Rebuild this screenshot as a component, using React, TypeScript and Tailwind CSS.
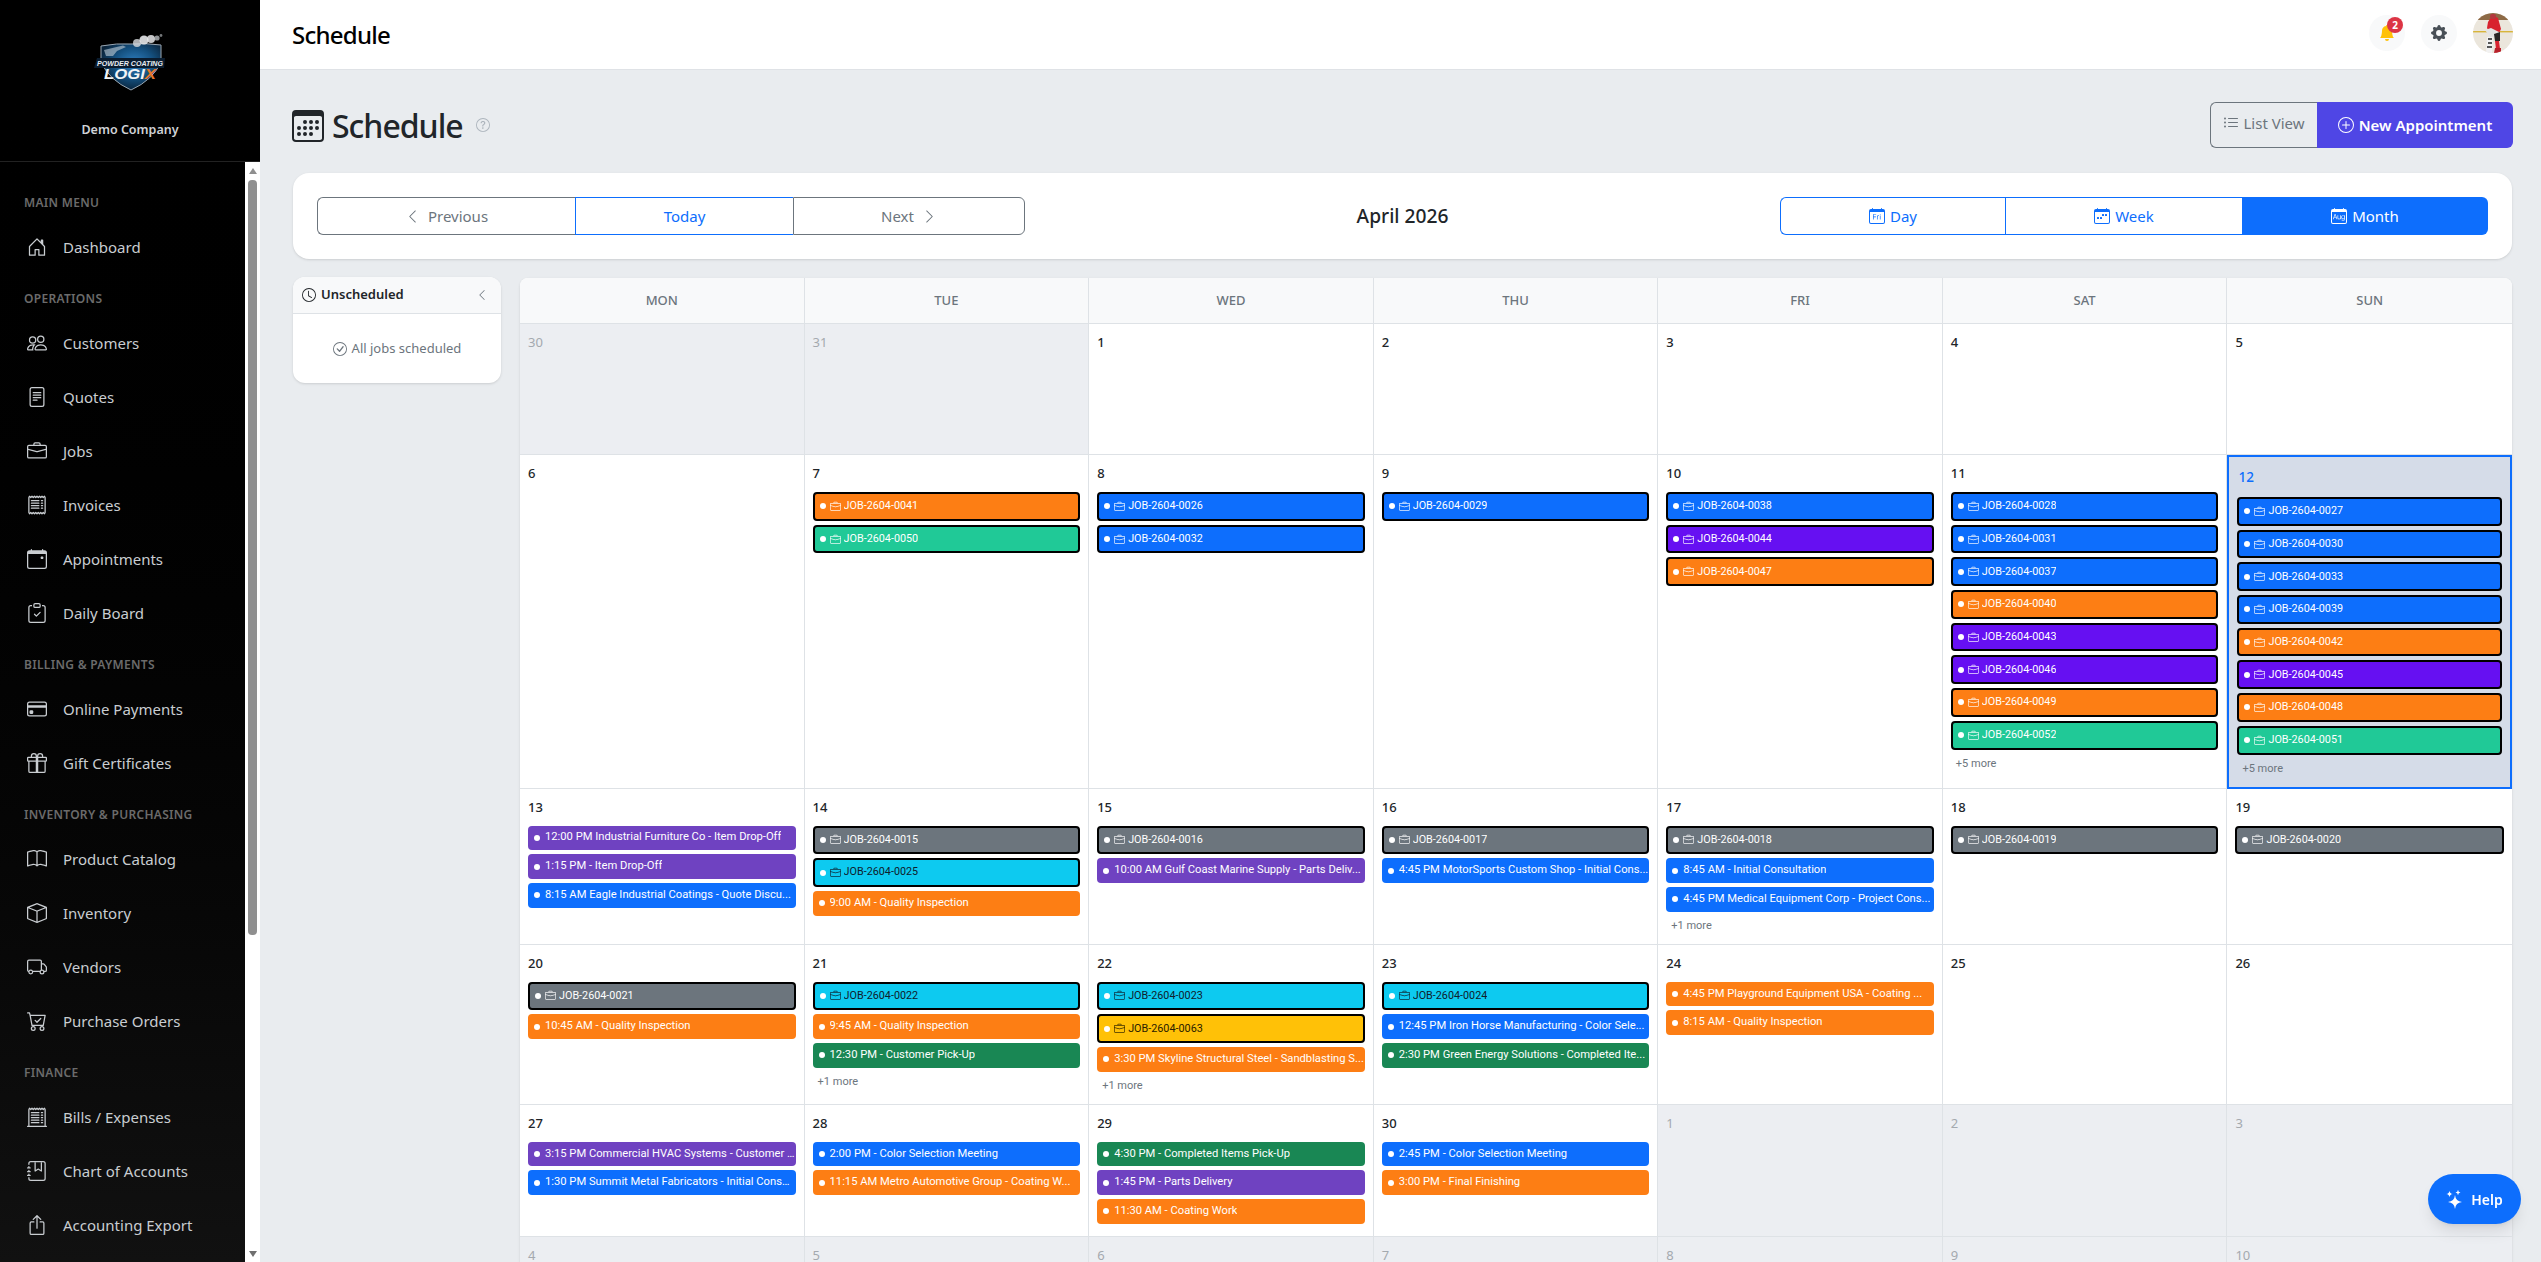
import React from "react";
import {
  BsHouseDoor, BsPeople, BsFileText, BsBriefcase, BsReceipt, BsCalendarEvent, BsClipboardCheck,
  BsCreditCard, BsGift, BsBook, BsBox, BsTruck, BsCartCheck, BsReceiptCutoff, BsJournalBookmark,
  BsBoxArrowUp, BsCalendar3, BsQuestionCircle, BsClock, BsCheckCircle, BsChevronLeft, BsChevronRight,
  BsListUl, BsPlusCircle, BsCalendarDay, BsCalendarWeek, BsCalendarMonth, BsBellFill, BsGearFill,
} from "react-icons/bs";

type IconT = React.ComponentType<{ className?: string; size?: number }>;

const NAV: { label: string; items: [string, IconT][] }[] = [
  { label: "Main Menu", items: [["Dashboard", BsHouseDoor]] },
  {
    label: "Operations",
    items: [
      ["Customers", BsPeople],
      ["Quotes", BsFileText],
      ["Jobs", BsBriefcase],
      ["Invoices", BsReceipt],
      ["Appointments", BsCalendarEvent],
      ["Daily Board", BsClipboardCheck],
    ],
  },
  { label: "Billing & Payments", items: [["Online Payments", BsCreditCard], ["Gift Certificates", BsGift]] },
  {
    label: "Inventory & Purchasing",
    items: [
      ["Product Catalog", BsBook],
      ["Inventory", BsBox],
      ["Vendors", BsTruck],
      ["Purchase Orders", BsCartCheck],
    ],
  },
  {
    label: "Finance",
    items: [
      ["Bills / Expenses", BsReceiptCutoff],
      ["Chart of Accounts", BsJournalBookmark],
      ["Accounting Export", BsBoxArrowUp],
    ],
  },
];

const COLORS = {
  blue: "bg-[#0d6efd] text-white",
  orange: "bg-[#fd7e14] text-white",
  teal: "bg-[#20c997] text-white",
  indigo: "bg-[#6610f2] text-white",
  purple: "bg-[#6f42c1] text-white",
  gray: "bg-[#6c757d] text-white",
  cyan: "bg-[#0dcaf0] text-[#10202c]",
  yellow: "bg-[#ffc107] text-[#2a2000]",
  green: "bg-[#198754] text-white",
};
type ColorName = keyof typeof COLORS;
type Chip = [string, ColorName];
type Cell = { d: number; other?: boolean; today?: boolean; chips?: Chip[]; more?: number };

const j = (n: string, c: ColorName): Chip => [`JOB-2604-${n}`, c];

const CELLS: Cell[] = [
  { d: 30, other: true }, { d: 31, other: true }, { d: 1 }, { d: 2 }, { d: 3 }, { d: 4 }, { d: 5 },
  { d: 6 },
  { d: 7, chips: [j("0041", "orange"), j("0050", "teal")] },
  { d: 8, chips: [j("0026", "blue"), j("0032", "blue")] },
  { d: 9, chips: [j("0029", "blue")] },
  { d: 10, chips: [j("0038", "blue"), j("0044", "indigo"), j("0047", "orange")] },
  {
    d: 11, more: 5,
    chips: [j("0028", "blue"), j("0031", "blue"), j("0037", "blue"), j("0040", "orange"), j("0043", "indigo"), j("0046", "indigo"), j("0049", "orange"), j("0052", "teal")],
  },
  {
    d: 12, today: true, more: 5,
    chips: [j("0027", "blue"), j("0030", "blue"), j("0033", "blue"), j("0039", "blue"), j("0042", "orange"), j("0045", "indigo"), j("0048", "orange"), j("0051", "teal")],
  },
  {
    d: 13,
    chips: [
      ["12:00 PM Industrial Furniture Co - Item Drop-Off", "purple"],
      ["1:15 PM - Item Drop-Off", "purple"],
      ["8:15 AM Eagle Industrial Coatings - Quote Discu...", "blue"],
    ],
  },
  { d: 14, chips: [j("0015", "gray"), j("0025", "cyan"), ["9:00 AM - Quality Inspection", "orange"]] },
  { d: 15, chips: [j("0016", "gray"), ["10:00 AM Gulf Coast Marine Supply - Parts Deliv...", "purple"]] },
  { d: 16, chips: [j("0017", "gray"), ["4:45 PM MotorSports Custom Shop - Initial Cons...", "blue"]] },
  {
    d: 17, more: 1,
    chips: [j("0018", "gray"), ["8:45 AM - Initial Consultation", "blue"], ["4:45 PM Medical Equipment Corp - Project Cons...", "blue"]],
  },
  { d: 18, chips: [j("0019", "gray")] },
  { d: 19, chips: [j("0020", "gray")] },
  { d: 20, chips: [j("0021", "gray"), ["10:45 AM - Quality Inspection", "orange"]] },
  { d: 21, more: 1, chips: [j("0022", "cyan"), ["9:45 AM - Quality Inspection", "orange"], ["12:30 PM - Customer Pick-Up", "green"]] },
  {
    d: 22, more: 1,
    chips: [j("0023", "cyan"), j("0063", "yellow"), ["3:30 PM Skyline Structural Steel - Sandblasting S...", "orange"]],
  },
  {
    d: 23,
    chips: [j("0024", "cyan"), ["12:45 PM Iron Horse Manufacturing - Color Sele...", "blue"], ["2:30 PM Green Energy Solutions - Completed Ite...", "green"]],
  },
  { d: 24, chips: [["4:45 PM Playground Equipment USA - Coating ...", "orange"], ["8:15 AM - Quality Inspection", "orange"]] },
  { d: 25 },
  { d: 26 },
  {
    d: 27,
    chips: [["3:15 PM Commercial HVAC Systems - Customer ...", "purple"], ["1:30 PM Summit Metal Fabricators - Initial Consu...", "blue"]],
  },
  { d: 28, chips: [["2:00 PM - Color Selection Meeting", "blue"], ["11:15 AM Metro Automotive Group - Coating W...", "orange"]] },
  { d: 29, chips: [["4:30 PM - Completed Items Pick-Up", "green"], ["1:45 PM - Parts Delivery", "purple"], ["11:30 AM - Coating Work", "orange"]] },
  { d: 30, chips: [["2:45 PM - Color Selection Meeting", "blue"], ["3:00 PM - Final Finishing", "orange"]] },
  { d: 1, other: true }, { d: 2, other: true }, { d: 3, other: true },
  { d: 4, other: true }, { d: 5, other: true }, { d: 6, other: true }, { d: 7, other: true },
  { d: 8, other: true }, { d: 9, other: true }, { d: 10, other: true },
];

function Logo() {
  return (
    <svg width="74" height="60" viewBox="0 0 74 60" aria-hidden="true" className="overflow-visible">
      <defs>
        <radialGradient id="shield" cx="0.55" cy="0.42" r="0.6">
          <stop offset="0" stopColor="#2f7fc0" />
          <stop offset="0.55" stopColor="#14507f" />
          <stop offset="1" stopColor="#0a2238" />
        </radialGradient>
      </defs>
      <path d="M8 14 Q24 11 38 12 Q54 11 68 13 L68 30 Q60 48 38 58 Q16 48 8 30 Z" fill="url(#shield)" stroke="#9aa7b3" strokeWidth="1" />
      <path d="M11 18 L30 13.5 L33 15 L24 19 L20 24 L13 24 Z" fill="#b3c3d0" opacity="0.65" />
      <circle cx="44" cy="11" r="4" fill="#d8dce0" opacity="0.8" />
      <circle cx="51" cy="8" r="4.6" fill="#e6e8ea" opacity="0.9" />
      <circle cx="58" cy="7" r="4" fill="#e6e8ea" opacity="0.85" />
      <circle cx="64" cy="6" r="2.6" fill="#cfd3d7" opacity="0.7" />
      <circle cx="68" cy="3.5" r="1.4" fill="#bfc4c9" opacity="0.6" />
      <path d="M4 26 L72 26 L71 36 L1 36 Z" fill="#0a1c2f" />
      <text x="37" y="34" textAnchor="middle" textLength="66" lengthAdjust="spacingAndGlyphs" fontFamily="Liberation Sans, sans-serif" fontStyle="italic" fontWeight="700" fontSize="8" fill="#e8edf2">
        POWDER COATING
      </text>
      <text x="37" y="46.5" textAnchor="middle" textLength="52" lengthAdjust="spacingAndGlyphs" fontFamily="Liberation Sans, sans-serif" fontStyle="italic" fontWeight="700" fontSize="14" fill="#f2f4f6">
        LOGI<tspan fill="#e9772a">X</tspan>
      </text>
    </svg>
  );
}

function Avatar() {
  return (
    <svg width="40" height="40" viewBox="0 0 40 40" aria-hidden="true" className="rounded-full shrink-0">
      <rect width="40" height="40" fill="#ebe6dc" />
      <rect width="40" height="7" fill="#8d6a46" />
      <rect y="18" width="40" height="1.4" fill="#d8b53a" />
      <path d="M15 9 Q19 1 25 5 L28 16 L26 20 L17 20 L14 15 Z" fill="#d8222e" />
      <rect x="17" y="1" width="6" height="5" rx="2" fill="#b3383e" />
      <path d="M12 17 L18 15 L26 19 L26 25 L17 24 Z" fill="#e4e4e4" />
      <path d="M21 21 L27 19 L27 28 L22 28 Z" fill="#2a2626" />
      <path d="M14 24 L20 24 L19 40 L13 40 Z" fill="#f2f2f2" />
      <path d="M15 26 L19 26 M15 30 L19 30 M14 34 L19 34" stroke="#222" strokeWidth="1.4" />
      <path d="M22 28 L26 28 L27 36 L23 36 Z" fill="#d8222e" />
      <path d="M22 35 L28 35 L28 40 L21 40 Z" fill="#b8202a" />
    </svg>
  );
}

function HelpStars() {
  return (
    <svg width="17" height="20" viewBox="0 0 17 20" fill="currentColor" aria-hidden="true" className="shrink-0">
      <path d="M9 6 Q9.6 12.4 16 13 Q9.6 13.6 9 20 Q8.4 13.6 2 13 Q8.4 12.4 9 6 Z" />
      <path d="M3.5 1.8 Q3.8 4.7 6.8 5 Q3.8 5.3 3.5 8.2 Q3.2 5.3 0.2 5 Q3.2 4.7 3.5 1.8 Z" />
      <path d="M12 0.8 Q12.2 3.3 14.5 3.5 Q12.2 3.7 12 6.2 Q11.8 3.7 9.5 3.5 Q11.8 3.3 12 0.8 Z" />
    </svg>
  );
}

function Sidebar() {
  return (
    <aside className="w-[260px] shrink-0 h-screen flex flex-col bg-gradient-to-b from-[#000000] to-[#111111] text-[#c9cdd1]">
      <div className="h-[162px] shrink-0 border-b border-[#222222] flex flex-col items-center">
        <div className="mt-[32px] h-[60px]">
          <Logo />
        </div>
        <div className="mt-[28px] text-[12.5px] leading-5 font-semibold text-[#cfd2d6]">Demo Company</div>
      </div>
      <div className="flex-1 min-h-0 flex">
        <nav className="flex-1 overflow-hidden pt-4">
          {NAV.map((s) => (
            <div key={s.label} className="mt-2">
              <div className="h-[34px] flex items-center pl-6 text-[12px] font-semibold uppercase tracking-[0.3px] text-[#6b6b6b]">{s.label}</div>
              {s.items.map(([name, Icon]) => (
                <div key={name} className="h-[54px] flex items-center pl-[27px] gap-4 text-[15px]">
                  <Icon size={20} className="shrink-0" />
                  <span>{name}</span>
                </div>
              ))}
            </div>
          ))}
        </nav>
        <div className="w-[15px] shrink-0 bg-white flex flex-col items-center px-[3px]">
          <div className="mt-[6px] w-0 h-0 border-x-[4px] border-x-transparent border-b-[6px] border-b-[#8f8f8f]" />
          <div className="mt-[6px] w-[9px] h-[755px] rounded-[4px] bg-[#8f8f8f]" />
          <div className="mt-auto mb-[5px] w-0 h-0 border-x-[4px] border-x-transparent border-t-[6px] border-t-[#6f6f6f]" />
        </div>
      </div>
    </aside>
  );
}

function CalChip({ chip }: { chip: Chip }) {
  const [t, c] = chip;
  const isJob = t.startsWith("JOB-");
  return (
    <div
      className={
        isJob
          ? `h-[28.7px] mb-1 border-2 border-black rounded-[4px] flex items-center pl-[5px] pr-1 text-[10.8px] font-['Roboto',sans-serif] ${COLORS[c]}`
          : `h-[24.7px] mb-1 rounded-[4px] flex items-center pl-[6px] text-[11.2px] font-['Roboto',sans-serif] ${COLORS[c]}`
      }
    >
      <span className="w-[6px] h-[6px] rounded-full bg-white shrink-0" />
      {isJob ? <BsBriefcase size={11} className="ml-[4px] mr-[3px] shrink-0 opacity-90" /> : <span className="w-[5px] shrink-0" />}
      <span className="truncate">{t}</span>
    </div>
  );
}

function DayCell({ cell, i }: { cell: Cell; i: number }) {
  const col = i % 7;
  const base = "min-w-0 min-h-[131px] ";
  const cls = cell.today
    ? base + "border-2 border-[#0d6efd] bg-[#d5dce8] px-2 pt-[10px] pb-2"
    : base +
      "border-b border-[#dee2e6] p-2 " +
      (col < 6 ? "border-r " : "") +
      (cell.other ? "bg-[#eceef2]" : "bg-white");
  return (
    <div className={cls}>
      <div
        className={
          cell.today
            ? "h-[21px] mb-[9px] text-[13.5px] leading-[21px] font-medium text-[#0d6efd] pl-px"
            : cell.other
              ? "h-[21px] mb-2 text-[13px] leading-[21px] text-[#a4a9af]"
              : "h-[21px] mb-2 text-[13px] leading-[21px] font-medium text-[#212529]"
        }
      >
        {cell.d}
      </div>
      {cell.chips?.map((c) => <CalChip key={c[0]} chip={c} />)}
      {cell.more ? (
        <div className="h-5 pl-[5px] text-[11px] leading-5 text-[#6c757d] font-['Roboto',sans-serif]">+{cell.more} more</div>
      ) : null}
    </div>
  );
}

function Main() {
  return (
    <main className="flex-1 min-w-0 h-screen overflow-hidden flex flex-col">
      <header className="h-[70px] shrink-0 bg-white border-b border-[#dfe2e6] flex items-center pl-8 pr-[28px]">
        <div className="text-[24px] font-medium tracking-[-0.75px] text-black">Schedule</div>
        <div className="ml-auto mb-[3px] flex items-center">
          <div className="relative w-9 h-9 rounded-full bg-[#f8f9fa] flex items-center justify-center text-[#ffc107]">
            <BsBellFill size={16} />
            <span className="absolute top-[2px] right-[2px] w-4 h-4 rounded-full bg-[#dc3545] text-white text-[10px] font-bold flex items-center justify-center">2</span>
          </div>
          <div className="ml-4 w-9 h-9 rounded-full bg-[#f8f9fa] flex items-center justify-center text-[#495057]">
            <BsGearFill size={16} />
          </div>
          <div className="ml-4">
            <Avatar />
          </div>
        </div>
      </header>

      <div className="flex-1 min-h-0 pl-8 pr-[29px] pt-8">
        <div className="h-[46px] flex items-start">
          <BsCalendar3 size={32} className="mt-2 text-[#212529]" />
          <h1 className="ml-2 mt-[1px] text-[32px] leading-[46px] font-medium tracking-[-1px] text-[#212529]">Schedule</h1>
          <BsQuestionCircle size={14} className="ml-[13px] mt-4 text-[#adb5bd]" />
          <div className="ml-auto -mr-px flex h-[46px]">
            <div className="w-[107px] border border-r-0 border-[#6c757d] rounded-l-md flex items-start justify-center gap-1 pt-[9px] text-[#6c757d] text-[15px]">
              <BsListUl size={16} className="mt-[3px]" />
              <span className="leading-[22px]">List View</span>
            </div>
            <div className="w-[196px] bg-[#4f46e5] rounded-r-md flex items-center justify-center gap-[5px] text-white text-[15px] font-semibold">
              <BsPlusCircle size={16} />
              <span>New Appointment</span>
            </div>
          </div>
        </div>

        <div className="mt-[25px] ml-px h-[86px] bg-white rounded-2xl shadow-sm px-6 flex items-center justify-between">
          <div className="flex h-[38px] text-[15px] w-[708px]">
            <div className="w-[258px] border border-r-0 border-[#6c757d] rounded-l-md text-[#6c757d] flex items-center justify-center gap-2">
              <BsChevronLeft size={15} />
              <span>Previous</span>
            </div>
            <div className="w-[218px] border border-r-0 border-[#0d6efd] text-[#0d6efd] flex items-center justify-center">Today</div>
            <div className="w-[232px] border border-[#6c757d] rounded-r-md text-[#6c757d] flex items-center justify-center gap-2">
              <span>Next</span>
              <BsChevronRight size={15} />
            </div>
          </div>
          <div className="text-[19.2px] font-medium text-[#212529]">April 2026</div>
          <div className="flex h-[38px] text-[15px] w-[708px] text-[#0d6efd]">
            <div className="w-[225px] border border-r-0 border-[#0d6efd] rounded-l-md flex items-center justify-center gap-[5px]">
              <BsCalendarDay size={16} />
              <span>Day</span>
            </div>
            <div className="w-[237px] border border-r-0 border-[#0d6efd] flex items-center justify-center gap-[5px]">
              <BsCalendarWeek size={16} />
              <span>Week</span>
            </div>
            <div className="w-[246px] bg-[#0d6efd] text-white rounded-r-md flex items-center justify-center gap-[5px]">
              <BsCalendarMonth size={16} />
              <span>Month</span>
            </div>
          </div>
        </div>

        <div className="mt-[18px] ml-px flex items-start gap-[19px]">
          <div className="w-[208px] shrink-0 h-[106px] bg-white rounded-xl shadow-sm overflow-hidden">
            <div className="h-[37px] bg-[#f8f9fa] border-b border-[#dee2e6] flex items-center pl-[9px] pr-[13px] text-[13px] font-semibold text-[#212529]">
              <BsClock size={14} className="mr-[5px]" />
              <span>Unscheduled</span>
              <BsChevronLeft size={12} className="ml-auto text-[#6c757d]" />
            </div>
            <div className="h-[69px] flex items-center justify-center gap-[5px] text-[13px] text-[#6c757d]">
              <BsCheckCircle size={14} />
              <span>All jobs scheduled</span>
            </div>
          </div>
          <div className="mt-px flex-1 min-w-0 bg-white rounded-t-lg shadow-sm overflow-hidden">
            <div className="grid grid-cols-7 h-[46px] bg-[#f8f9fa] border-b border-[#dee2e6]">
              {["MON", "TUE", "WED", "THU", "FRI", "SAT", "SUN"].map((d, i) => (
                <div key={d} className={i < 6 ? "border-r border-[#dee2e6] flex items-center justify-center text-[13px] font-medium text-[#6c757d]" : "flex items-center justify-center text-[13px] font-medium text-[#6c757d]"}>
                  {d}
                </div>
              ))}
            </div>
            <div className="grid grid-cols-7 border-[#dee2e6]">
              {CELLS.map((c, i) => (
                <DayCell key={i} cell={c} i={i} />
              ))}
            </div>
          </div>
        </div>
      </div>
    </main>
  );
}

export default function App() {
  return (
    <div className="relative h-screen flex overflow-hidden bg-[#e9ecef] font-['Noto_Sans','Open_Sans',sans-serif]">
      <Sidebar />
      <Main />
      <div className="fixed right-5 bottom-[38px] w-[93px] h-[50px] rounded-full bg-[#0d6efd] text-white flex items-center justify-center gap-[8px] text-[14px] font-semibold shadow-lg">
        <HelpStars />
        <span>Help</span>
      </div>
    </div>
  );
}
